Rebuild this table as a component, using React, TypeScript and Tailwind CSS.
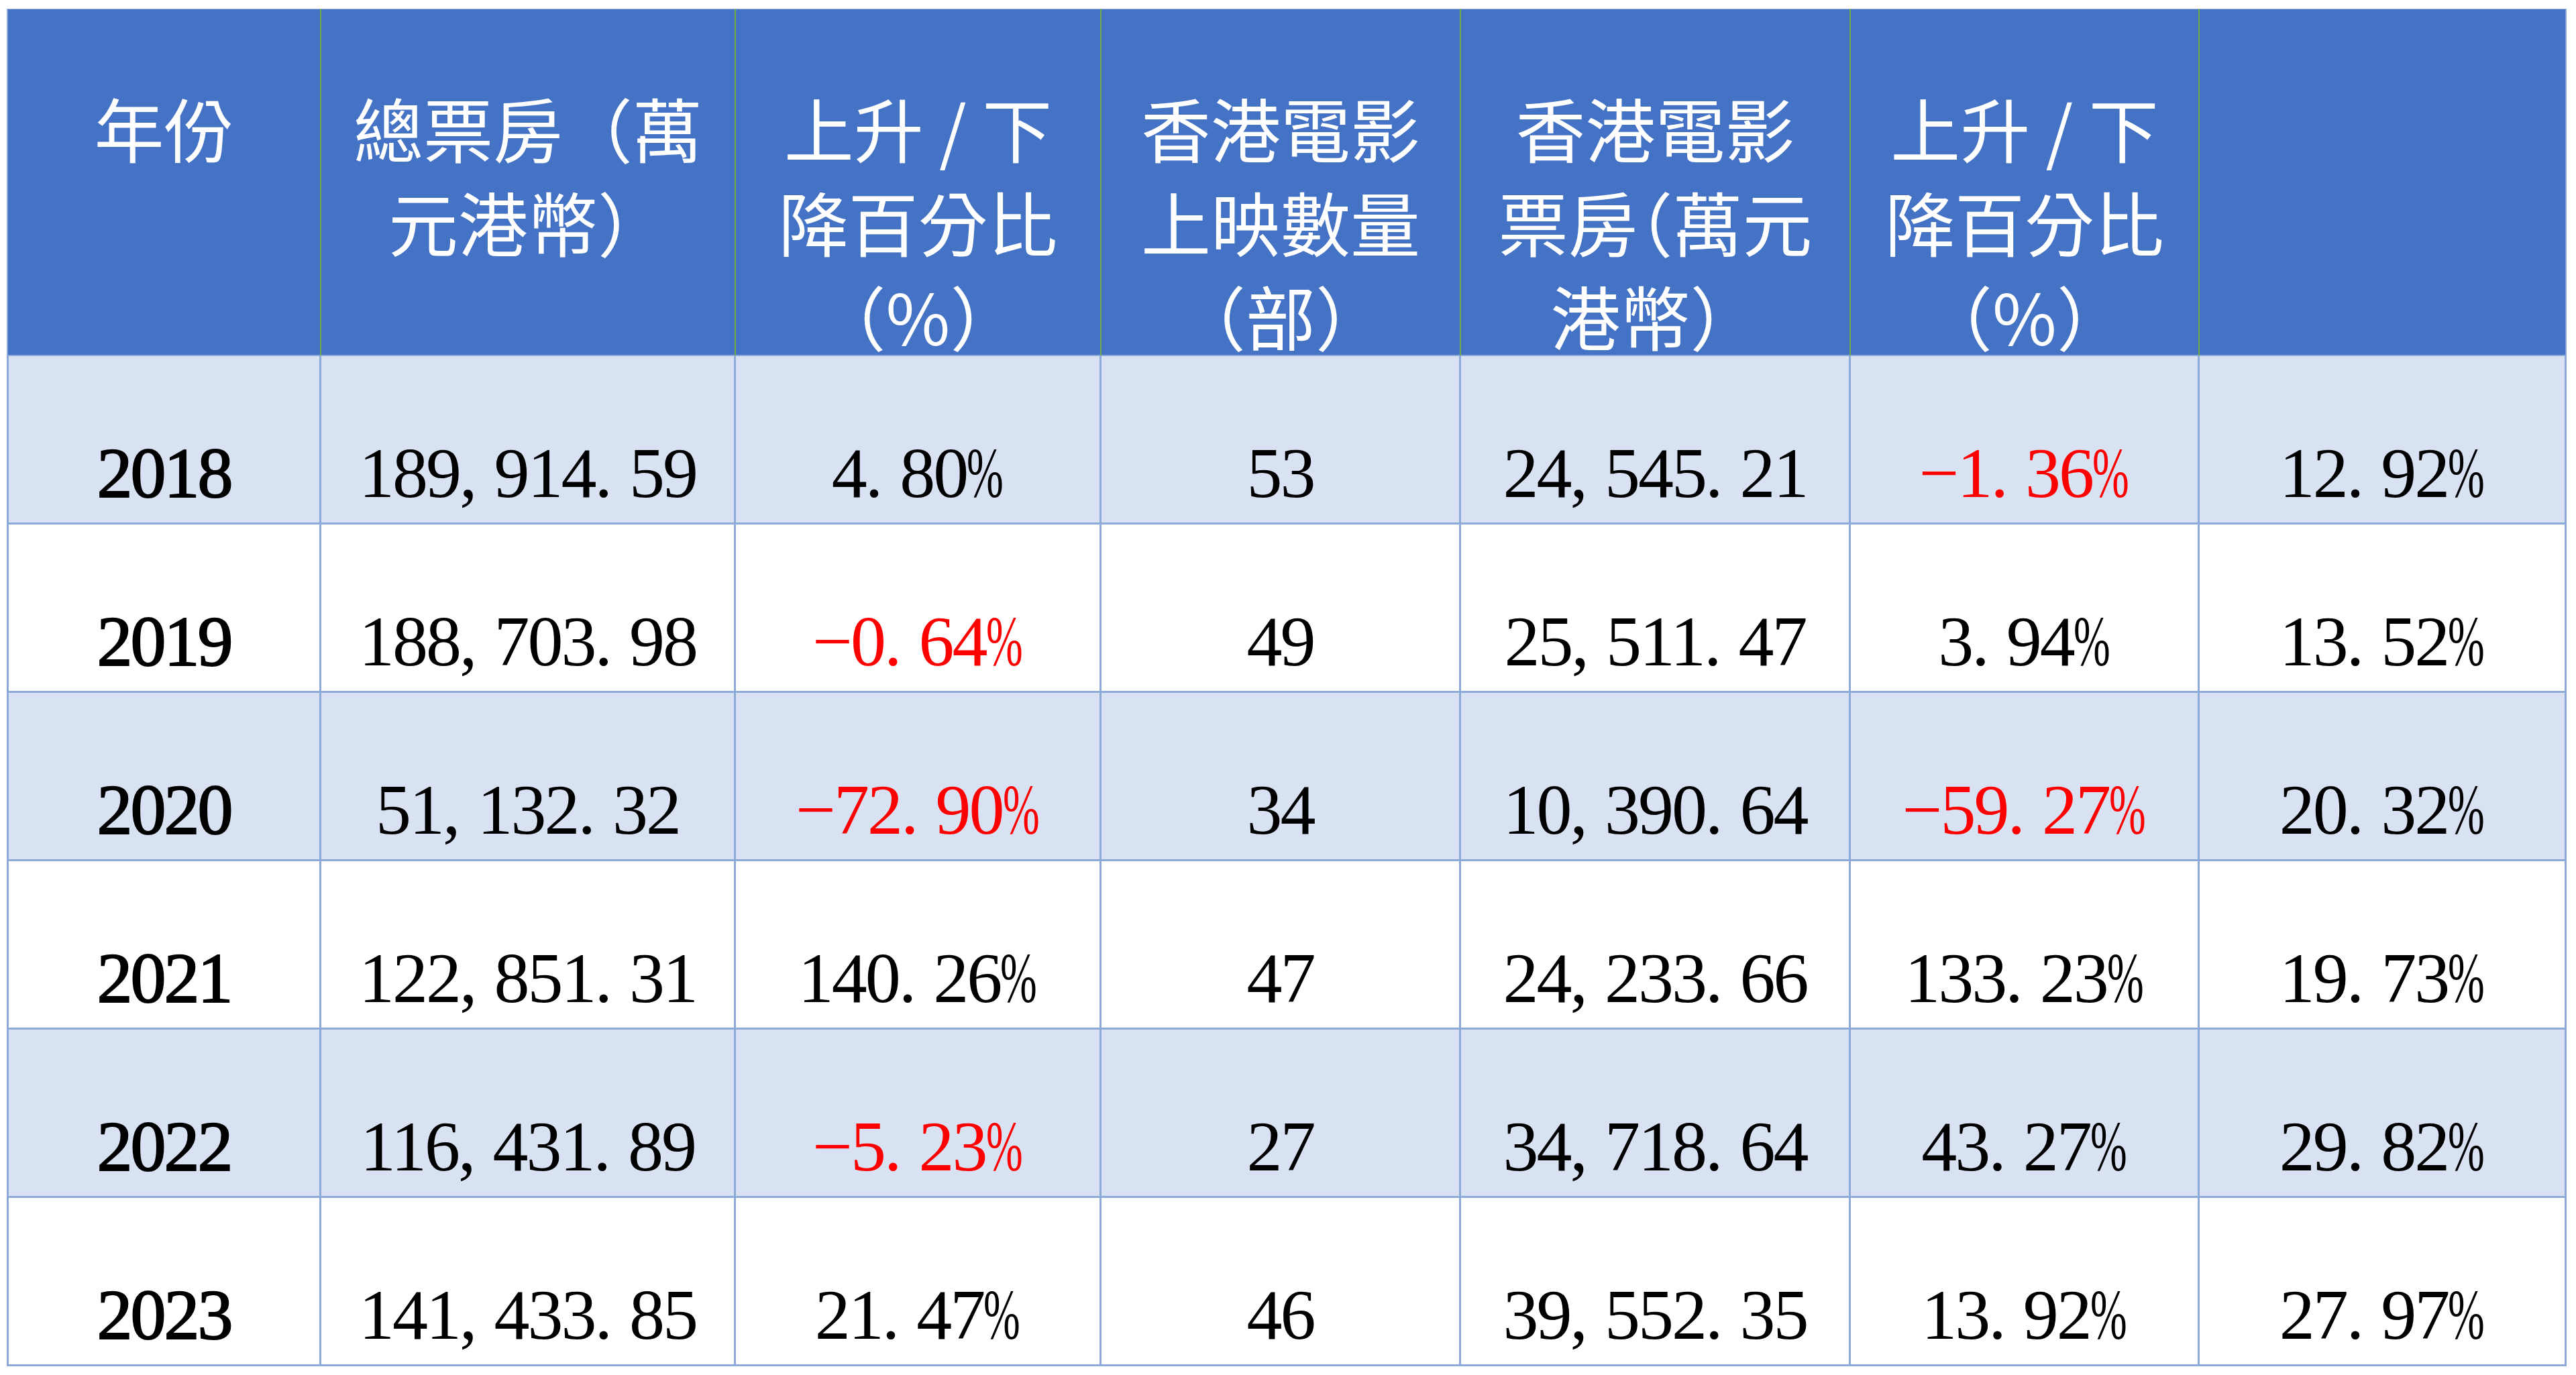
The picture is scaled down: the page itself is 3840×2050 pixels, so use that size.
import React from 'react'

type Row = {
  year: string
  total: string
  change: string
  hkCount: string
  hkBox: string
  hkChange: string
  share: string
}

const rows: Row[] = [
  { year: '2018', total: '189,914.59', change: '4.80%', hkCount: '53', hkBox: '24,545.21', hkChange: '−1.36%', share: '12.92%' },
  { year: '2019', total: '188,703.98', change: '−0.64%', hkCount: '49', hkBox: '25,511.47', hkChange: '3.94%', share: '13.52%' },
  { year: '2020', total: '51,132.32', change: '−72.90%', hkCount: '34', hkBox: '10,390.64', hkChange: '−59.27%', share: '20.32%' },
  { year: '2021', total: '122,851.31', change: '140.26%', hkCount: '47', hkBox: '24,233.66', hkChange: '133.23%', share: '19.73%' },
  { year: '2022', total: '116,431.89', change: '−5.23%', hkCount: '27', hkBox: '34,718.64', hkChange: '43.27%', share: '29.82%' },
  { year: '2023', total: '141,433.85', change: '21.47%', hkCount: '46', hkBox: '39,552.35', hkChange: '13.92%', share: '27.97%' },
]

// 表頭：每行文字手動分行
const headers: string[][] = [
  ['年份'],
  ['總票房（萬', '元港幣）'],
  ['上升 / 下', '降百分比', '（%）'],
  ['香港電影', '上映數量', '（部）'],
  ['香港電影', '票房（萬元', '港幣）'],
  ['上升 / 下', '降百分比', '（%）'],
  [],
]

function Num({ text }: { text: string }) {
  return (
    <>
      {text.split('').map((ch, i) => {
        if (ch === ',' || ch === '.') {
          return (
            <span key={i} className="mr-[28px]">
              {ch}
            </span>
          )
        }
        if (ch === '%') {
          return (
            <span key={i} className="inline-block w-[0.52em] origin-left scale-x-[0.62]">
              %
            </span>
          )
        }
        return <span key={i}>{ch}</span>
      })}
    </>
  )
}

function Cell({
  value,
  first,
  bold,
  light,
}: {
  value: string
  first?: boolean
  bold?: boolean
  light: boolean
}) {
  const negative = value.startsWith('−')
  return (
    <div
      className={`flex items-end justify-center pb-[20px] border-r-[3px] border-b-[3px] border-[#8eaadb] ${
        first ? 'border-l-[3px]' : ''
      } ${light ? 'bg-[#d9e2f3]' : 'bg-white'}`}
    >
      <span
        className={`text-[106px] leading-none tracking-[-3px] whitespace-nowrap font-normal font-['Liberation_Serif','Noto_Sans_CJK_TC',serif] ${
          bold ? '[-webkit-text-stroke:2px_black]' : ''
        } ${negative ? 'text-[#ff0000]' : 'text-black'}`}
      >
        <Num text={value} />
      </span>
    </div>
  )
}

export default function App() {
  return (
    <div className="w-[3840px] h-[2050px] bg-white pl-[10px] pt-[13px] overflow-hidden">
      <div className="grid grid-cols-[469px_618px_545px_536px_581px_520px_547px] grid-rows-[518px_repeat(6,251px)] w-[3816px]">
        {headers.map((lines, i) => (
          <div
            key={i}
            className={`bg-[#4472c4] border-t border-b-2 border-b-[#8eaadb] border-t-[#8eaadb] pt-[106px] flex flex-col items-center ${
              i === 0 ? 'border-l-2 border-l-[#8eaadb]' : ''
            } ${
              i === headers.length - 1
                ? 'border-r-2 border-r-[#8eaadb]'
                : 'border-r-2 border-r-[#70ad47]'
            }`}
          >
            {lines.map((line, j) => (
              <div
                key={j}
                className={`text-white text-[104px] leading-[140px] whitespace-nowrap font-['Noto_Sans_CJK_TC','Noto_Sans_CJK_SC',sans-serif] ${
                  line === '票房（萬元' ? '[font-feature-settings:"halt"]' : ''
                }`}
              >
                {line}
              </div>
            ))}
          </div>
        ))}

        {rows.map((r, idx) => {
          const light = idx % 2 === 0
          return (
            <React.Fragment key={r.year}>
              <Cell value={r.year} first bold light={light} />
              <Cell value={r.total} light={light} />
              <Cell value={r.change} light={light} />
              <Cell value={r.hkCount} light={light} />
              <Cell value={r.hkBox} light={light} />
              <Cell value={r.hkChange} light={light} />
              <Cell value={r.share} light={light} />
            </React.Fragment>
          )
        })}
      </div>
    </div>
  )
}
